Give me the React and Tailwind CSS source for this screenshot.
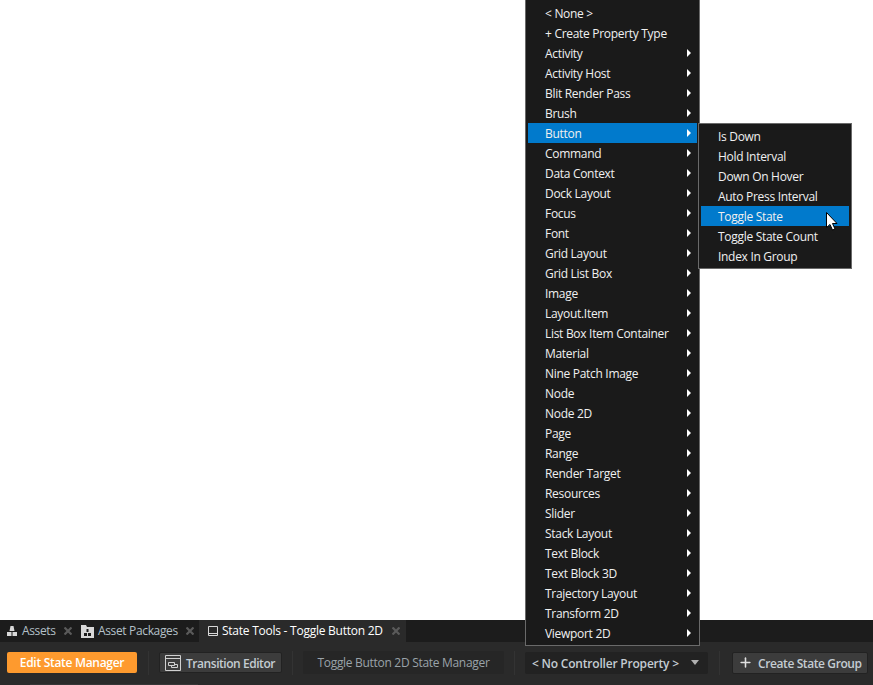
import React from "react";
import { Plus } from "lucide-react";

const font = { fontFamily: '"Open Sans", "Noto Sans", sans-serif' };

const mainItems = [
  ["< None >", false],
  ["+ Create Property Type", false],
  ["Activity", true],
  ["Activity Host", true],
  ["Blit Render Pass", true],
  ["Brush", true],
  ["Button", true],
  ["Command", true],
  ["Data Context", true],
  ["Dock Layout", true],
  ["Focus", true],
  ["Font", true],
  ["Grid Layout", true],
  ["Grid List Box", true],
  ["Image", true],
  ["Layout.Item", true],
  ["List Box Item Container", true],
  ["Material", true],
  ["Nine Patch Image", true],
  ["Node", true],
  ["Node 2D", true],
  ["Page", true],
  ["Range", true],
  ["Render Target", true],
  ["Resources", true],
  ["Slider", true],
  ["Stack Layout", true],
  ["Text Block", true],
  ["Text Block 3D", true],
  ["Trajectory Layout", true],
  ["Transform 2D", true],
  ["Viewport 2D", true],
];

const subItems = ["Is Down", "Hold Interval", "Down On Hover", "Auto Press Interval", "Toggle State", "Toggle State Count", "Index In Group"];

const Arrow = () => (
  <svg width="4" height="8" viewBox="0 0 4 8" className="fill-white">
    <path d="M0 0 L4 4 L0 8 Z" />
  </svg>
);

const Close = () => (
  <svg width="8" height="8" viewBox="0 0 8 8" className="stroke-[#5a5a5a]" strokeWidth="2.2">
    <path d="M0.5 0.5 L7.5 7.5 M7.5 0.5 L0.5 7.5" />
  </svg>
);

const AssetsIcon = () => (
  <svg width="10" height="11" viewBox="0 0 10 11" className="fill-[#d8d8d8]">
    <path d="M3.5 0 H6.5 L7.5 5 H2.5 Z M0 6 H4.5 V10 H0 Z M5.5 6 H10 V10 H5.5 Z" />
  </svg>
);

const PackagesIcon = () => (
  <svg width="13" height="13" viewBox="0 0 13 13" className="fill-[#d8d8d8]">
    <path fillRule="evenodd" d="M0 0 H5 L6 2 H13 V13 H0 Z M5.5 4 V7 H7.5 V4 Z M3 8 V11 H6 V8 Z M7 8 V11 H10 V8 Z" />
  </svg>
);

const StateIcon = () => (
  <svg width="12" height="12" viewBox="0 0 12 12" fill="none" className="stroke-[#d8d8d8]">
    <path d="M1.5 1.5 H10.5 V10.5 H1.5 Z M1.5 8.5 H10.5" />
  </svg>
);

const TransitionIcon = () => (
  <svg width="16" height="16" viewBox="0 0 16 16" fill="none" className="stroke-[#d0d0d0]">
    <path d="M0.5 0.5 H15.5 V15.5 H0.5 Z M0.5 3.5 H15.5" />
    <path d="M3.5 7.5 H9.5 V10.5 H3.5 Z M6.5 10.5 V12.5 H12.5 V9.5 H9.5" />
  </svg>
);

const Tab = ({ icon, label, active, className }) => (
  <div className={`flex items-center h-[22px] whitespace-nowrap ${active ? "bg-[#2a2a2a] text-white" : "text-[#b4c0c8]"} ${className}`}>
    {icon}
    <span className={`text-[12px] leading-none ${active ? "tracking-[-0.25px]" : "tracking-[-0.35px]"}`}>{label}</span>
    <span className="ml-[8px] flex"><Close /></span>
  </div>
);

const Sep = ({ className }) => <div className={`w-px h-[24px] bg-[#333333] ${className}`} />;

export default function App() {
  return (
    <div className="relative w-[873px] h-[685px] bg-white overflow-hidden flex flex-col justify-end" style={font}>
      {/* Bottom panel */}
      <div className="h-[65px] flex flex-col">
        <div className="h-[22px] bg-[#1c1c1c] flex items-center pl-[7px]">
          <Tab icon={<AssetsIcon />} label="Assets" className="gap-[5px] [&>span:last-child]:ml-[3px] w-[74px]" />
          <Tab icon={<PackagesIcon />} label="Asset Packages" className="gap-[4px] [&>span:last-child]:ml-[4px] w-[118px]" />
          <Tab icon={<StateIcon />} label="State Tools - Toggle Button 2D" active className="gap-[3px] pl-[8px] pr-[6px] [&>span:last-child]:ml-[6px]" />
        </div>
        <div className="h-[43px] bg-[#2a2a2a] flex flex-col">
          <div className="h-[41px] flex items-center pl-[7px] whitespace-nowrap">
            <button className="w-[130px] h-[21px] pt-px rounded-[2px] bg-[#fe9a2e] text-white text-[12px] tracking-[-0.3px] font-semibold leading-none">Edit State Manager</button>
            <Sep className="ml-[11px]" />
            <button className="ml-[10px] w-[123px] h-[21px] rounded-[2px] bg-[#3c3c3c] border border-[#222222] flex items-center pl-[5px] text-[#c4ccd2] text-[12px] tracking-[-0.45px] font-semibold leading-none">
              <TransitionIcon />
              <span className="ml-[5px] pt-[2px]">Transition Editor</span>
            </button>
            <Sep className="ml-[10px]" />
            <div className="ml-[10px] w-[201px] h-[23px] pt-px rounded-[2px] bg-[#262626] flex items-center justify-center text-[#9aa3a9] text-[12px] tracking-[-0.3px] leading-none">Toggle Button 2D State Manager</div>
            <Sep className="ml-[10px]" />
            <div className="ml-[10px] w-[183px] h-[22px] rounded-[2px] bg-[#222222] flex items-center justify-between pl-[7px] pr-[9px] text-[#c4ccd2] text-[12px] tracking-[-0.2px] font-semibold leading-none">
              <span className="pt-[2px]">&lt; No Controller Property &gt;</span>
              <svg width="8" height="5" viewBox="0 0 8 5" className="fill-[#b0b0b0]"><path d="M0 0 H8 L4 5 Z" /></svg>
            </div>
            <Sep className="ml-[11px]" />
            <button className="ml-[12px] w-[136px] h-[22px] rounded-[2px] bg-[#3c3c3c] border border-[#222222] flex items-center pl-[5px] text-[#c4ccd2] text-[12px] tracking-[-0.4px] font-semibold leading-none">
              <Plus size={15} strokeWidth={2.5} className="text-[#e0e0e0]" />
              <span className="ml-[5px] pt-[2px]">Create State Group</span>
            </button>
          </div>
          <div className="mt-px ml-[30px] w-[168px] h-px bg-[#363636]" />
        </div>
      </div>

      {/* Main dropdown */}
      <div className="absolute left-[525px] top-[-1px] w-[175px] bg-[#1a1a1a] border border-[#6a6a6a] px-[2px] pt-[3px] pb-[2px]">
        {mainItems.map(([label, hasSub]) => (
          <div key={label} className={`h-[20px] flex items-center justify-between pl-[17px] pr-[6px] text-[12px] tracking-[-0.3px] leading-none text-[#f0f0f0] ${label === "Button" ? "bg-[#017acc]" : ""}`}>
            <span className="pt-[2px]">{label}</span>
            {hasSub && <Arrow />}
          </div>
        ))}
      </div>

      {/* Button submenu */}
      <div className="absolute left-[698px] top-[123px] w-[154px] bg-[#1a1a1a] border border-[#6a6a6a] px-[2px] pt-[2px] pb-[2px]">
        {subItems.map((label) => (
          <div key={label} className={`h-[20px] flex items-center pl-[17px] text-[12px] tracking-[-0.3px] leading-none text-[#f0f0f0] ${label === "Toggle State" ? "bg-[#017acc]" : ""}`}>
            <span className="pt-[2px]">{label}</span>
          </div>
        ))}
      </div>

      {/* Mouse cursor */}
      <svg width="12" height="19" viewBox="0 0 12 19" className="absolute left-[826px] top-[212px]">
        <path d="M0.5 0.5 V15.5 L4 12.5 L6.5 18 L9 17 L6.5 11.5 H11 Z" fill="white" stroke="black" strokeWidth="1" />
      </svg>
    </div>
  );
}
